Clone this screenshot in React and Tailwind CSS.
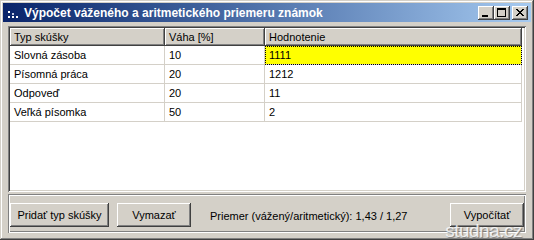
import React from 'react';

const ROWS = [
  { typ: 'Slovná zásoba', vaha: '10', hodnotenie: '1111' },
  { typ: 'Písomná práca', vaha: '20', hodnotenie: '1212' },
  { typ: 'Odpoveď', vaha: '20', hodnotenie: '11' },
  { typ: 'Veľká písomka', vaha: '50', hodnotenie: '2' },
];

const RAISED =
  'bg-[#d4d0c8] shadow-[inset_-1px_-1px_#404040,inset_1px_1px_#ffffff,inset_-2px_-2px_#808080,inset_2px_2px_#d4d0c8]';

// small title bar button (minimize / maximize / close)
const CaptionButton = ({ children }) => (
  <div className={`flex h-[14px] w-[16px] items-center justify-center ${RAISED}`}>
    <svg width="16" height="14" viewBox="0 0 16 14">{children}</svg>
  </div>
);

const Button = ({ label, className = '' }) => (
  <div className={`flex h-[24px] items-center justify-center ${RAISED} ${className}`}>{label}</div>
);

const App = () => {
  return (
    <div className="relative h-[240px] w-[534px] overflow-hidden bg-[#d4d0c8] p-[3px] font-['Liberation_Sans',Arial,sans-serif] text-[11px] text-black shadow-[inset_-1px_-1px_#404040,inset_1px_1px_#d4d0c8,inset_-2px_-2px_#808080,inset_2px_2px_#ffffff]">
      {/* Title bar */}
      <div className="flex h-[19px] items-center bg-linear-to-r from-[#0a246a] to-[#a6caf0] pl-[5px] pr-[3px]">
        <svg width="12" height="10" viewBox="0 0 12 10" className="mt-[2px]">
          <rect x="0" y="2" width="2" height="2" fill="#ffffff" />
          <rect x="0" y="7" width="2" height="2" fill="#ffffff" />
          <rect x="4" y="7" width="2" height="2" fill="#ffffff" />
          <rect x="4" y="4" width="2" height="2" fill="#c0c8e0" />
          <rect x="8" y="7" width="2" height="2" fill="#ffffff" />
        </svg>
        <span className="ml-[4px] text-[12px] font-bold text-white">Výpočet váženého a aritmetického priemeru známok</span>
        <div className="ml-auto flex items-center">
          <CaptionButton>
            <rect x="4" y="9" width="6" height="2" fill="#000" />
          </CaptionButton>
          <CaptionButton>
            <rect x="3.5" y="2.5" width="8" height="8" fill="none" stroke="#000" />
            <rect x="3" y="2" width="9" height="2" fill="#000" />
          </CaptionButton>
          <div className="ml-[2px]">
            <CaptionButton>
              <path d="M4 3 L11 10 M5 3 L12 10 M11 3 L4 10 M12 3 L5 10" stroke="#000" strokeWidth="1" />
            </CaptionButton>
          </div>
        </div>
      </div>

      <div className="px-[5px] pt-[4px]">
        {/* Grid */}
        <div className="h-[166px] bg-white p-[2px] shadow-[inset_1px_1px_#808080,inset_-1px_-1px_#ffffff,inset_2px_2px_#404040,inset_-2px_-2px_#d4d0c8]">
          <div className="flex h-[18px]">
            <div className={`flex w-[155px] items-center pl-[4px] ${RAISED}`}>Typ skúšky</div>
            <div className={`flex w-[100px] items-center pl-[4px] ${RAISED}`}>Váha [%]</div>
            <div className={`flex w-[257px] items-center pl-[4px] ${RAISED}`}>Hodnotenie</div>
          </div>
          {ROWS.map((row, index) => (
            <div key={row.typ} className="flex h-[19px]">
              <div className="flex w-[155px] items-center border-r border-b border-[#d4d0c8] pl-[4px]">{row.typ}</div>
              <div className="flex w-[100px] items-center border-r border-b border-[#d4d0c8] pl-[4px]">{row.vaha}</div>
              <div
                className={`flex w-[257px] items-center border-r border-b border-[#d4d0c8] pl-[4px] ${
                  index === 0 ? 'bg-[#ffff00] outline-1 -outline-offset-1 outline-dotted outline-black' : ''
                }`}
              >
                {row.hodnotenie}
              </div>
            </div>
          ))}
        </div>

        {/* Bottom panel */}
        <div className="mt-[2px] flex h-[39px] items-start px-[2px] pt-[9px] shadow-[inset_1px_1px_#808080,inset_-1px_-1px_#ffffff,inset_2px_2px_#ffffff,inset_-2px_-2px_#808080]">
          <Button label="Pridať typ skúšky" className="w-[99px]" />
          <Button label="Vymazať" className="ml-[8px] w-[74px]" />
          <span className="ml-[19px] mt-[5px]">Priemer (vážený/aritmetický): 1,43 / 1,27</span>
          <Button label="Vypočítať" className="ml-auto w-[74px]" />
        </div>
      </div>

      {/* watermark */}
      <div className="pointer-events-none absolute bottom-[0px] right-[12px] text-[19px] leading-[19px] tracking-[-0.5px] text-white/80 [text-shadow:1px_1px_1px_#7a7a7a]">
        studna.cz
      </div>
    </div>
  );
};

export default App;
